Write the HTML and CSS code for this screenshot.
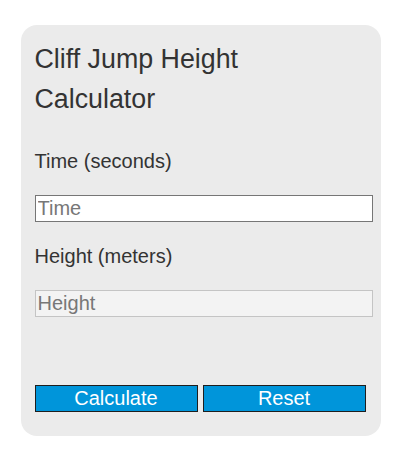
FILE: index.html
```html
<!DOCTYPE html>
<html lang="en">
<head>
    <meta charset="UTF-8">
    <meta name="viewport" content="width=device-width, initial-scale=1.0">
    <title>Cliff Jump Height Calculator</title>
    <link rel="stylesheet" href="styles.css">
</head>
<body>
<div class="calculator">
    <h1>Cliff Jump Height Calculator</h1>
    <label for="time">Time (seconds)</label>
    <input type="text" id="time" placeholder="Time">
    <label for="height">Height (meters)</label>
    <input type="text" id="height" class="result" placeholder="Height" readonly>
    <div class="buttons">
        <button type="button" id="calc">Calculate</button>
        <button type="button" id="reset">Reset</button>
    </div>
</div>

<script>
    const timeInput = document.getElementById('time');
    const heightInput = document.getElementById('height');

    // h = 1/2 * g * t^2
    document.getElementById('calc').addEventListener('click', function() {
        const t = parseFloat(timeInput.value);
        if (isNaN(t)) {
            heightInput.value = '';
            return;
        }
        heightInput.value = (0.5 * 9.81 * t * t).toFixed(2);
    });

    document.getElementById('reset').addEventListener('click', function() {
        timeInput.value = '';
        heightInput.value = '';
    });
</script>
</body>
</html>
```

FILE: styles.css
```css
body {
    margin: 0;
    padding: 25px 0 0;
    font-family: 'Liberation Sans', Arial, sans-serif;
    background-color: #fff;
    color: #333;
}

.calculator {
    width: 332px;
    margin: 0 auto;
    padding: 14px 14px 24px;
    background-color: #ebebeb;
    border-radius: 16px;
}

.calculator h1 {
    margin: 0 0 31px;
    max-width: 280px; /* title wraps onto two lines */
    font-size: 26.8px;
    font-weight: normal;
    line-height: 40px;
    color: #333;
}

.calculator label {
    display: block;
    font-size: 20px;
    line-height: 23px;
    margin-bottom: 22px;
}

.calculator input {
    display: block;
    width: 100%;
    height: 21px;
    margin: 0 0 23px;
    padding: 2px;
    border: 1px solid #767676;
    background-color: #fff;
    font-family: inherit;
    font-size: 20px;
    color: #333;
}

.calculator input::placeholder {
    color: #777;
}

.calculator input.result {
    margin-bottom: 68px;
    background-color: #f3f3f3;
    border-color: #c4c4c4;
}

.buttons {
    display: flex;
    gap: 5px;
}

.buttons button {
    width: 163px;
    height: 27px;
    padding: 0;
    border: 1px solid #1e1e1e;
    background-color: #0095da;
    color: #fff;
    font-family: inherit;
    font-size: 20px;
    cursor: pointer;
}
```
